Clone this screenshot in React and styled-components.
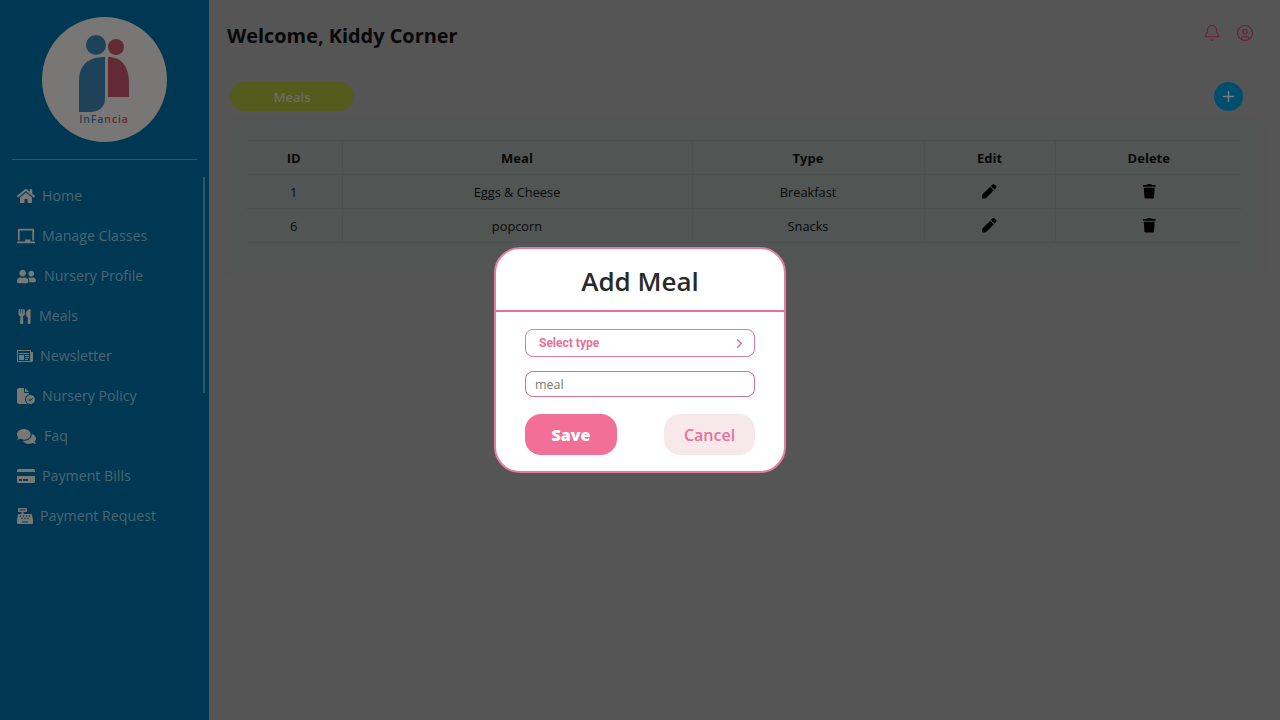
import React from "react";
import styled, { createGlobalStyle } from "styled-components";
import { FaHome, FaChalkboard, FaUserFriends, FaUtensils, FaComments, FaCashRegister, FaCreditCard, FaPen, FaTrash } from "react-icons/fa";
import { FaFileCircleCheck } from "react-icons/fa6";
import { ImNewspaper } from "react-icons/im";
import { FiPlus, FiChevronRight } from "react-icons/fi";
import { Bell, CircleUser } from "lucide-react";

const GlobalStyle = createGlobalStyle`
    html, body { margin: 0; height: 100%; }
    body { font-family: "Open Sans", "Liberation Sans", sans-serif; background: #aaa; overflow: hidden; }
    * { box-sizing: border-box; }
`;

const Page = styled.div`
    display: flex;
    width: 1280px;
    height: 720px;
`;

const Sidebar = styled.aside`
    width: 209px;
    flex-shrink: 0;
    background: #006ea4;
    display: flex;
    flex-direction: column;
    padding: 17px 12px 0;
`;

const LogoCircle = styled.div`
    width: 125px;
    height: 125px;
    border-radius: 50%;
    background: #f2eeea;
    align-self: center;
    margin-left: -1px;
`;

const Divider = styled.hr`
    width: 185px;
    height: 1px;
    margin: 17px 0 16px;
    border: 0;
    background: #4fb0dc;
`;

const MenuWrap = styled.nav`
    display: flex;
    flex-direction: column;
    position: relative;
`;

const ScrollLine = styled.span`
    position: absolute;
    left: 191px;
    top: 1px;
    width: 2px;
    height: 216px;
    background: #4fb0dc;
`;

const MenuItem = styled.a`
    height: 40px;
    display: flex;
    align-items: center;
    gap: ${(p) => p.$gap}px;
    padding-left: 5px;
    color: #98cce4;
    font-size: 14.2px;
    line-height: 40px;
    svg { font-size: ${(p) => p.$icon}px; color: #f0f0ea; flex-shrink: 0; }
`;

const Main = styled.main`
    flex: 1;
    display: flex;
    flex-direction: column;
    padding: 0 22px 0 18px;
`;

const TopBar = styled.header`
    height: 71px;
    display: flex;
    align-items: center;
    justify-content: space-between;
    padding-right: 4px;
`;

const Title = styled.h1`
    margin: 0;
    font-size: 19.9px;
    font-weight: 700;
    color: #111;
`;

const TopIcons = styled.div`
    display: flex;
    gap: 15px;
    margin-top: -5px;
    color: #d83a68;
    svg { display: block; }
`;

const ActionRow = styled.div`
    height: 55px;
    display: flex;
    align-items: flex-start;
    justify-content: space-between;
    padding: 11px 15px 0 3px;
`;

const Pill = styled.button`
    width: 124px;
    height: 29px;
    border: 0;
    border-radius: 15px;
    background: #a6b63a;
    color: #d8dcc0;
    font: 600 13px "Open Sans", sans-serif;
`;

const AddButton = styled.button`
    width: 29px;
    height: 29px;
    padding: 0;
    border: 0;
    border-radius: 50%;
    background: #009cdc;
    color: #e8f4fa;
    font-size: 17px;
    display: flex;
    align-items: center;
    justify-content: center;
`;

const Card = styled.section`
    margin-left: 5px;
    width: 1026px;
    height: 144px;
    padding: 14px;
    background: #a2adaa;
    box-shadow: 0 0 6px rgba(150, 170, 165, 0.6);
`;

const Table = styled.table`
    width: 996px;
    border-collapse: collapse;
    table-layout: fixed;
    color: #111;
    font-size: 12.8px;
    th, td {
        height: 34px;
        padding: 0;
        text-align: center;
        border: 1px solid #96a29e;
    }
    th { font-weight: 700; font-size: 13px; }
    tr > :first-child { border-left: 0; }
    tr > :last-child { border-right: 0; }
    td svg { display: block; margin: 0 auto; font-size: 14.5px; color: #000; }
`;

const Overlay = styled.div`
    position: fixed;
    inset: 0;
    background: rgba(0, 0, 0, 0.5);
    display: flex;
    align-items: flex-start;
    justify-content: center;
    padding-top: 247px;
`;

const Modal = styled.div`
    width: 292px;
    height: 226px;
    background: #fff;
    border: 2px solid #e57a9c;
    border-radius: 26px;
`;

const ModalHead = styled.div`
    height: 63px;
    border-bottom: 2px solid #e4709a;
    display: flex;
    align-items: center;
    justify-content: center;
    color: #2a2a2a;
    font-size: 26px;
    font-weight: 600;
    padding-top: 2px;
`;

const ModalBody = styled.div`
    padding: 17px 29px 0;
    display: flex;
    flex-direction: column;
`;

const SelectBox = styled.div`
    height: 28px;
    border: 1.5px solid #dd7a9e;
    border-radius: 8px;
    display: flex;
    align-items: center;
    justify-content: space-between;
    padding: 0 7px 0 13px;
    color: #e8709a;
    font: 700 12px "Roboto", "Liberation Sans", sans-serif;
    svg { font-size: 15px; color: #c9709a; }
`;

const Input = styled.input`
    margin-top: 14px;
    width: 100%;
    height: 26px;
    border: 1.5px solid #cf7095;
    border-radius: 8px;
    padding: 0 9px;
    font: 400 12.5px "Open Sans", sans-serif;
    outline: 0;
    &::placeholder { color: #777; opacity: 1; }
`;

const Buttons = styled.div`
    margin-top: 17px;
    display: flex;
    justify-content: space-between;
`;

const ModalButton = styled.button`
    width: ${(p) => (p.$primary ? 92 : 91)}px;
    height: 41px;
    border: 0;
    border-radius: 16px;
    background: ${(p) => (p.$primary ? "#f27097" : "#f6e8eb")};
    color: ${(p) => (p.$primary ? "#fff" : "#e9709a")};
    font-family: "Open Sans", sans-serif;
    font-size: 16px;
    font-weight: ${(p) => (p.$primary ? 800 : 600)};
`;

const Logo = () => (
    <svg width="125" height="125" viewBox="0 0 125 125">
        <circle cx="54" cy="28" r="10" fill="#3a84b4" />
        <circle cx="74" cy="30" r="8" fill="#c85468" />
        <path d="M37 95 V64 C37 48 46 40 63 40 V82 C63 91 56 95 47 95 Z" fill="#3a84b4" />
        <path d="M66 40 C80 40 87 50 87 66 V80 H66 Z" fill="#c85468" />
        <text x="62" y="106" textAnchor="middle" fontFamily="Open Sans, sans-serif" fontSize="10.5" fontWeight="600" letterSpacing="0.9">
            <tspan fill="#3a84b4">InFa</tspan>
            <tspan fill="#c85468">ncia</tspan>
        </text>
    </svg>
);

const menu = [
    { label: "Home", Icon: FaHome, icon: 18, gap: 7 },
    { label: "Manage Classes", Icon: FaChalkboard, icon: 18, gap: 7 },
    { label: "Nursery Profile", Icon: FaUserFriends, icon: 19, gap: 8 },
    { label: "Meals", Icon: FaUtensils, icon: 15, gap: 7 },
    { label: "Newsletter", Icon: ImNewspaper, icon: 16, gap: 7 },
    { label: "Nursery Policy", Icon: FaFileCircleCheck, icon: 18, gap: 7 },
    { label: "Faq", Icon: FaComments, icon: 19, gap: 8 },
    { label: "Payment Bills", Icon: FaCreditCard, icon: 18, gap: 7 },
    { label: "Payment Request", Icon: FaCashRegister, icon: 16, gap: 7 },
];

const meals = [
    { id: 1, meal: "Eggs & Cheese", type: "Breakfast" },
    { id: 6, meal: "popcorn", type: "Snacks" },
];

const App = () => (
    <Page>
        <GlobalStyle />
        <Sidebar>
            <LogoCircle><Logo /></LogoCircle>
            <Divider />
            <MenuWrap>
                <ScrollLine />
                {menu.map(({ label, Icon, icon, gap }) => (
                    <MenuItem key={label} $icon={icon} $gap={gap}><Icon />{label}</MenuItem>
                ))}
            </MenuWrap>
        </Sidebar>
        <Main>
            <TopBar>
                <Title>Welcome, Kiddy Corner</Title>
                <TopIcons><Bell size={18} strokeWidth={1.5} /><CircleUser size={18} strokeWidth={1.5} /></TopIcons>
            </TopBar>
            <ActionRow>
                <Pill>Meals</Pill>
                <AddButton><FiPlus /></AddButton>
            </ActionRow>
            <Card>
                <Table>
                    <colgroup>
                        <col width="96" /><col width="350" /><col width="232" /><col width="131" /><col width="187" />
                    </colgroup>
                    <thead>
                        <tr><th>ID</th><th>Meal</th><th>Type</th><th>Edit</th><th>Delete</th></tr>
                    </thead>
                    <tbody>
                        {meals.map((m) => (
                            <tr key={m.id}>
                                <td>{m.id}</td>
                                <td>{m.meal}</td>
                                <td>{m.type}</td>
                                <td><FaPen /></td>
                                <td><FaTrash /></td>
                            </tr>
                        ))}
                    </tbody>
                </Table>
            </Card>
        </Main>
        <Overlay>
            <Modal>
                <ModalHead>Add Meal</ModalHead>
                <ModalBody>
                    <SelectBox>Select type<FiChevronRight /></SelectBox>
                    <Input placeholder="meal" />
                    <Buttons>
                        <ModalButton $primary>Save</ModalButton>
                        <ModalButton>Cancel</ModalButton>
                    </Buttons>
                </ModalBody>
            </Modal>
        </Overlay>
    </Page>
);

export default App;
